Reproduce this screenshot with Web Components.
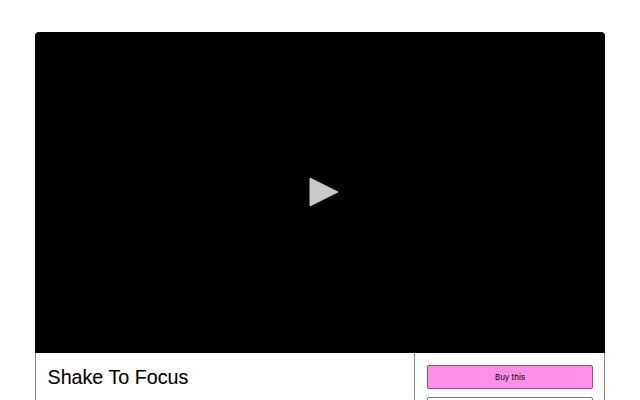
<!DOCTYPE html>
<html>
<head>
<meta charset="utf-8">
<style>
    html, body { margin: 0; height: 400px; overflow: hidden; background: #fff; }
    body { font-family: "Liberation Sans", Arial, sans-serif; color: #000; }
</style>
</head>
<body>
<product-page>
    <video-player slot="video"></video-player>
    <product-title slot="title">Shake To Focus</product-title>
    <product-button slot="actions" primary>Buy this</product-button>
    <product-button slot="actions"></product-button>
</product-page>

<script>
class ProductPage extends HTMLElement {
    constructor() {
        super();
        this.attachShadow({ mode: 'open' });
        this.shadowRoot.innerHTML = `
        <style>
            :host { display: block; padding: 32px 35px 0; }
            .card { width: 570px; }
            .info {
                display: grid;
                grid-template-columns: 378px 191px;
                border-left: 1px solid #8a8a8a;
                border-right: 1px solid #8a8a8a;
                box-sizing: border-box;
                height: 47px;
                overflow: hidden;
            }
            .main { padding: 12px 12px 12px 11.5px; }
            .side {
                border-left: 1px solid #8a8a8a;
                padding: 12px;
                display: flex;
                flex-direction: column;
                gap: 8px;
            }
        </style>
        <div class="card">
            <slot name="video"></slot>
            <div class="info">
                <div class="main"><slot name="title"></slot></div>
                <div class="side"><slot name="actions"></slot></div>
            </div>
        </div>
        `;
    }
}

class VideoPlayer extends HTMLElement {
    constructor() {
        super();
        this.attachShadow({ mode: 'open' });
        this.shadowRoot.innerHTML = `
        <style>
            :host {
                display: flex;
                align-items: center;
                justify-content: center;
                height: 321px;
                background: #000;
                border-radius: 4px 4px 0 0;
            }
            svg { display: block; width: 30px; height: 32px; margin: 0 0 2px 7px; }
        </style>
        <svg viewBox="0 0 30 32" aria-label="Play"><path d="M1 2L29 16L1 30Z" fill="#c9c9c9" stroke="#c9c9c9" stroke-width="1" stroke-linejoin="round"/></svg>
        `;
    }
}

class ProductTitle extends HTMLElement {
    constructor() {
        super();
        this.attachShadow({ mode: 'open' });
        this.shadowRoot.innerHTML = `
        <style>
            :host { display: block; font-size: 19.7px; line-height: 24px; -webkit-text-stroke: 0.1px #000; }
        </style>
        <slot></slot>
        `;
    }
}

class ProductButton extends HTMLElement {
    constructor() {
        super();
        this.attachShadow({ mode: 'open' });
        this.shadowRoot.innerHTML = `
        <style>
            :host {
                display: flex;
                align-items: center;
                justify-content: center;
                box-sizing: border-box;
                height: 24px;
                flex: none;
                border: 1px solid #8a5580;
                border-radius: 2px;
                background: #fff;
                font-family: Inter, "Liberation Sans", sans-serif;
                font-size: 8px;
                cursor: pointer;
            }
            :host([primary]) { background: #ff90e8; }
            :host(:not([primary])) { border-color: #7a7a7a; }
        </style>
        <slot></slot>
        `;
    }
}

customElements.define('product-page', ProductPage);
customElements.define('video-player', VideoPlayer);
customElements.define('product-title', ProductTitle);
customElements.define('product-button', ProductButton);
</script>
</body>
</html>
